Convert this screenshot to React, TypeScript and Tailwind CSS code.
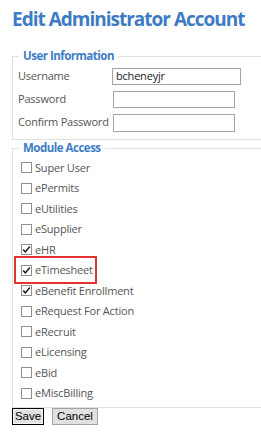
import React from "react";

const modules = [
  { name: "Super User", checked: false },
  { name: "ePermits", checked: false },
  { name: "eUtilities", checked: false },
  { name: "eSupplier", checked: false },
  { name: "eHR", checked: true },
  { name: "eTimesheet", checked: true },
  { name: "eBenefit Enrollment", checked: true },
  { name: "eRequest For Action", checked: false },
  { name: "eRecruit", checked: false },
  { name: "eLicensing", checked: false },
  { name: "eBid", checked: false },
  { name: "eMiscBilling", checked: false },
];

function Box({ checked }: { checked: boolean }) {
  return (
    <span className="ml-[3px] flex h-[11px] w-[11px] shrink-0 items-center justify-center border border-[#8f8f8f] bg-white">
      {checked && (
        <svg width="9" height="9" viewBox="0 0 9 9">
          <path d="M1.2 4.6 L3.4 6.9 L7.8 1.6" fill="none" stroke="#222" strokeWidth="1.6" />
        </svg>
      )}
    </span>
  );
}

export default function App() {
  const font = { fontFamily: '"Open Sans", sans-serif' };
  return (
    <div className="relative h-[432px] w-[261px] overflow-hidden bg-white" style={font}>
      <h1 className="whitespace-nowrap pl-[12px] pt-[7px] text-[19px] font-bold leading-[24px] tracking-[-1px] text-[#3d7cc4]">
        Edit Administrator Account
      </h1>

      <fieldset className="ml-[12px] mt-[18px] w-[290px] border border-[#e0e0e0] pb-[5px] pl-[5px]">
        <legend className="ml-[1px] px-[4px] text-[11.5px] font-bold leading-[14px] tracking-[-0.5px] text-[#3d7cc4]">
          User Information
        </legend>
        <div className="pt-[2px] text-[11px] tracking-[-0.2px] text-[#555]">
          <div className="flex h-[23px] items-center">
            <span className="w-[94px]">Username</span>
            <div className="flex h-[17px] w-[129px] items-center border border-[#a5a5a5] pl-[3px] text-[#222]">
              bcheneyjr
            </div>
          </div>
          <div className="flex h-[23px] items-center">
            <span className="w-[95px]">Password</span>
            <div className="h-[17px] w-[122px] border border-[#a5a5a5]" />
          </div>
          <div className="flex h-[23px] items-center">
            <span className="w-[95px]">Confirm Password</span>
            <div className="h-[18px] w-[122px] border border-[#a5a5a5]" />
          </div>
        </div>
      </fieldset>

      <fieldset className="ml-[12px] mt-[1px] w-[290px] border border-[#e0e0e0] pb-[3.5px] pl-[5px]">
        <legend className="ml-[1px] px-[4px] text-[11.5px] font-bold leading-[14px] tracking-[-0.5px] text-[#3d7cc4]">
          Module Access
        </legend>
        <div className="pt-[2.5px] text-[11px] tracking-[-0.2px] text-[#555]">
          {modules.map((m) => (
            <div key={m.name} className="flex h-[20.5px] items-center gap-[3px]">
              <Box checked={m.checked} />
              <span className="whitespace-nowrap">{m.name}</span>
            </div>
          ))}
        </div>
      </fieldset>

      <div
        className="flex items-start gap-[8px] pl-[12px] text-[11.5px] text-black"
        style={{ fontFamily: '"Liberation Sans", Arial, sans-serif' }}
      >
        <button className="h-[17px] w-[32px] border border-black bg-[#e1e1e1] leading-none shadow-[inset_0_0_0_1px_#f5f5f5]">
          Save
        </button>
        <button className="h-[17px] w-[46px] border border-[#a3a3a3] bg-[#e1e1e1] leading-none">
          Cancel
        </button>
      </div>

      <div className="absolute left-[14px] top-[256px] h-[28px] w-[83px] border-2 border-[#e2332f]" />
    </div>
  );
}
